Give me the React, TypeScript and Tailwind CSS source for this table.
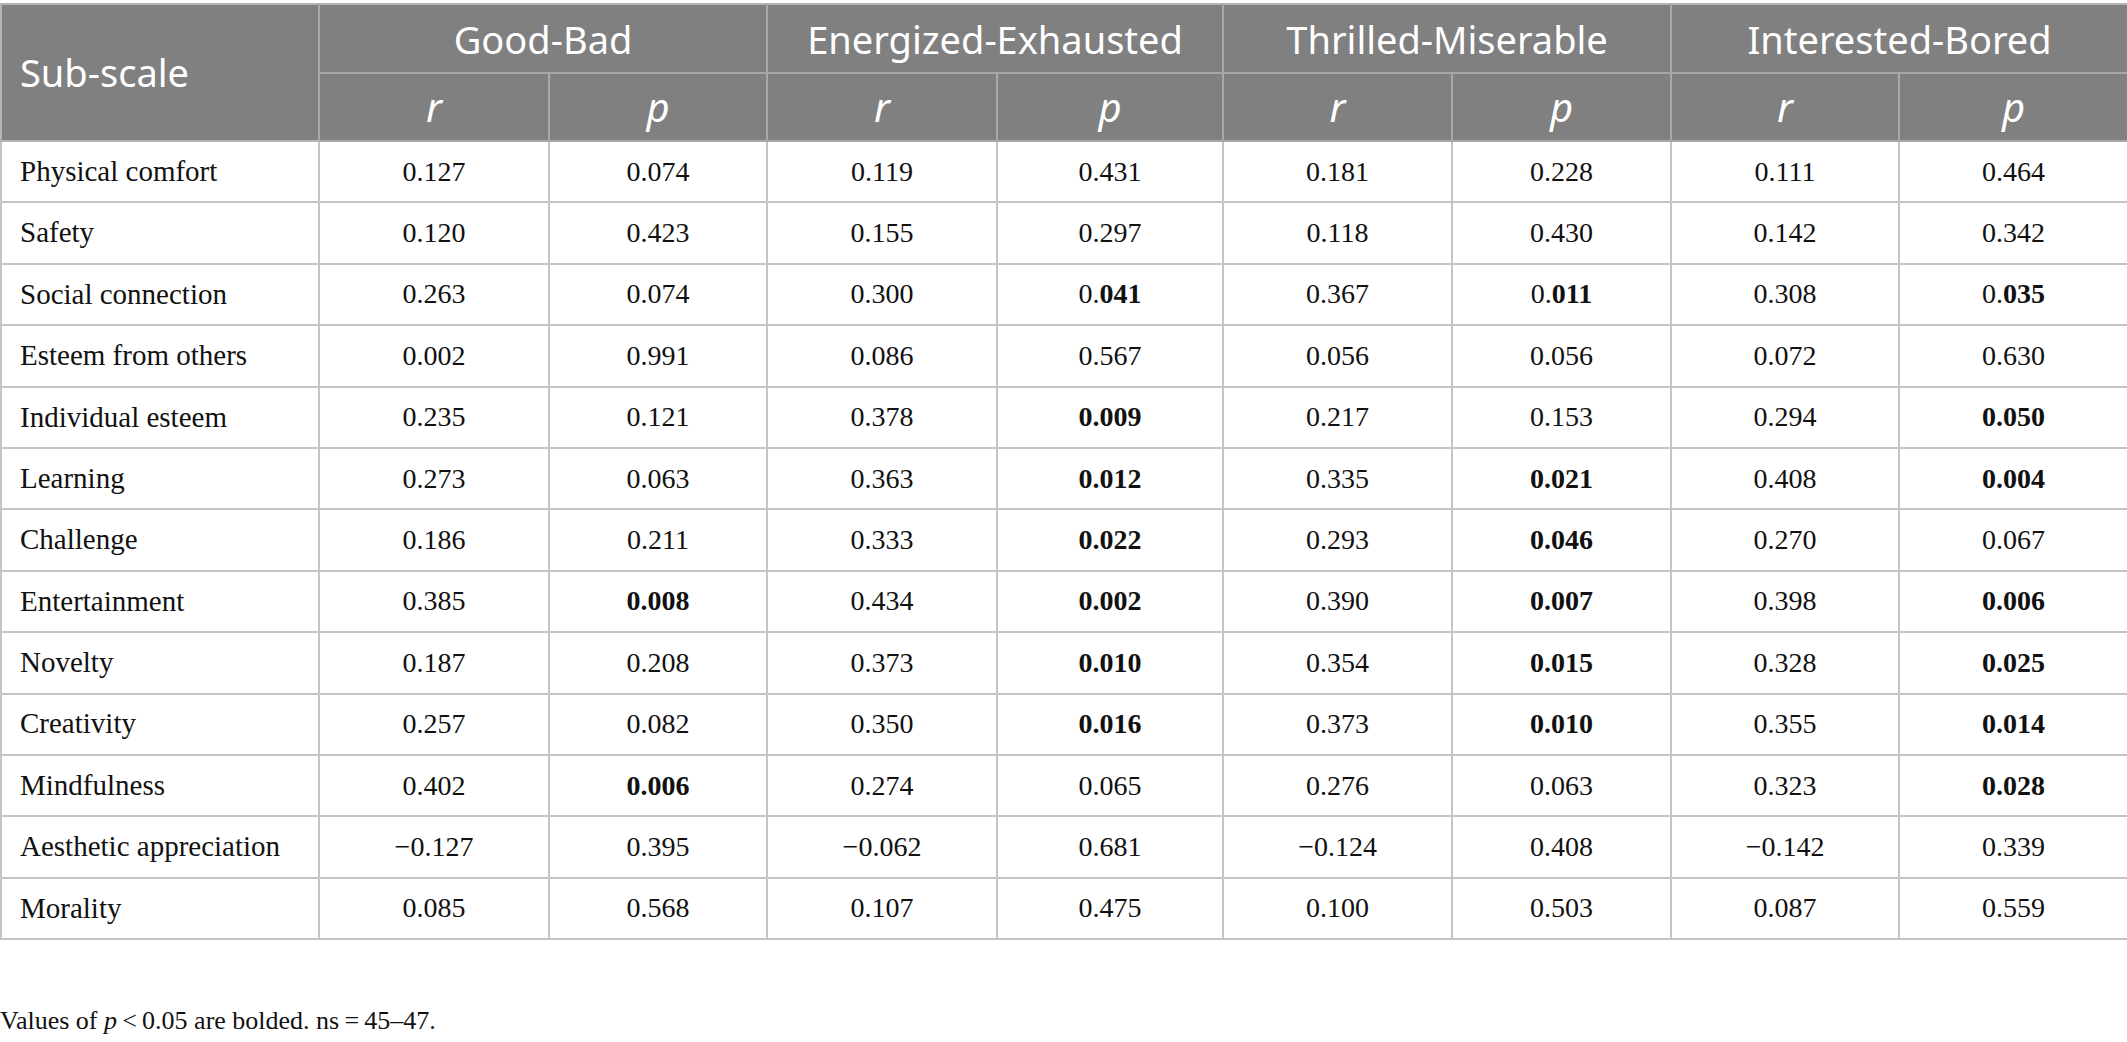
import React from 'react';

// "**" marks where the bold part of a value starts
const rows: [string, string[]][] = [
  ['Physical comfort', ['0.127', '0.074', '0.119', '0.431', '0.181', '0.228', '0.111', '0.464']],
  ['Safety', ['0.120', '0.423', '0.155', '0.297', '0.118', '0.430', '0.142', '0.342']],
  ['Social connection', ['0.263', '0.074', '0.300', '0.**041', '0.367', '0.**011', '0.308', '0.**035']],
  ['Esteem from others', ['0.002', '0.991', '0.086', '0.567', '0.056', '0.056', '0.072', '0.630']],
  ['Individual esteem', ['0.235', '0.121', '0.378', '**0.009', '0.217', '0.153', '0.294', '**0.050']],
  ['Learning', ['0.273', '0.063', '0.363', '**0.012', '0.335', '**0.021', '0.408', '**0.004']],
  ['Challenge', ['0.186', '0.211', '0.333', '**0.022', '0.293', '**0.046', '0.270', '0.067']],
  ['Entertainment', ['0.385', '**0.008', '0.434', '**0.002', '0.390', '**0.007', '0.398', '**0.006']],
  ['Novelty', ['0.187', '0.208', '0.373', '**0.010', '0.354', '**0.015', '0.328', '**0.025']],
  ['Creativity', ['0.257', '0.082', '0.350', '**0.016', '0.373', '**0.010', '0.355', '**0.014']],
  ['Mindfulness', ['0.402', '**0.006', '0.274', '0.065', '0.276', '0.063', '0.323', '**0.028']],
  ['Aesthetic appreciation', ['\u22120.127', '0.395', '\u22120.062', '0.681', '\u22120.124', '0.408', '\u22120.142', '0.339']],
  ['Morality', ['0.085', '0.568', '0.107', '0.475', '0.100', '0.503', '0.087', '0.559']],
];

const groups = ['Good-Bad', 'Energized-Exhausted', 'Thrilled-Miserable', 'Interested-Bored'];
const colWidths = [318, 230, 218, 230, 226, 229, 219, 228, 229];

const Value: React.FC<{ v: string }> = ({ v }) => {
  const [plain, bold] = v.split('**');
  return (
    <>
      {plain}
      {bold !== undefined && <b className="font-bold">{bold}</b>}
    </>
  );
};

export default function App() {
  return (
    <div className="w-[2127px] h-[1042px] bg-white overflow-hidden">
      <table className="mt-[3px] w-[2127px] table-fixed border-collapse">
        <colgroup>
          {colWidths.map((w, i) => (
            <col key={i} style={{ width: w }} />
          ))}
        </colgroup>
        <thead className="bg-[#7f807f] text-white font-['Noto_Sans',sans-serif] text-[38px]">
          <tr className="h-[69px]">
            <th
              rowSpan={2}
              className="border-2 border-[#b4b4b4] border-r-[#a8a8a8] text-left font-normal pl-[18px] align-middle"
            >
              Sub-scale
            </th>
            {groups.map((g) => (
              <th key={g} colSpan={2} className="border-2 border-[#a8a8a8] border-t-[#b4b4b4] font-normal text-center leading-none">
                {g}
              </th>
            ))}
          </tr>
          <tr className="h-[68px]">
            {groups.map((g) => (
              <React.Fragment key={g}>
                <th className="border-2 border-[#a8a8a8] font-normal italic text-center leading-none text-[40px]">r</th>
                <th className="border-2 border-[#a8a8a8] font-normal italic text-center leading-none text-[40px]">p</th>
              </React.Fragment>
            ))}
          </tr>
        </thead>
        <tbody className="font-['Liberation_Serif',serif] text-[28px] text-[#111]">
          {rows.map(([name, vals]) => (
            <tr key={name} className="h-[61.4px]">
              <td className="border-2 border-[#c4c4c4] pl-[18px] text-left text-[29px]">{name}</td>
              {vals.map((v, i) => (
                <td key={i} className="border-2 border-[#c4c4c4] text-center">
                  <Value v={v} />
                </td>
              ))}
            </tr>
          ))}
        </tbody>
      </table>
      <p className="mt-[66px] font-['Liberation_Serif',serif] text-[26px] text-[#111] leading-[30px]">
        Values of <i>p</i>{'\u2009'}&lt;{'\u2009'}0.05 are bolded. ns{'\u2009'}={'\u2009'}45–47.
      </p>
    </div>
  );
}
